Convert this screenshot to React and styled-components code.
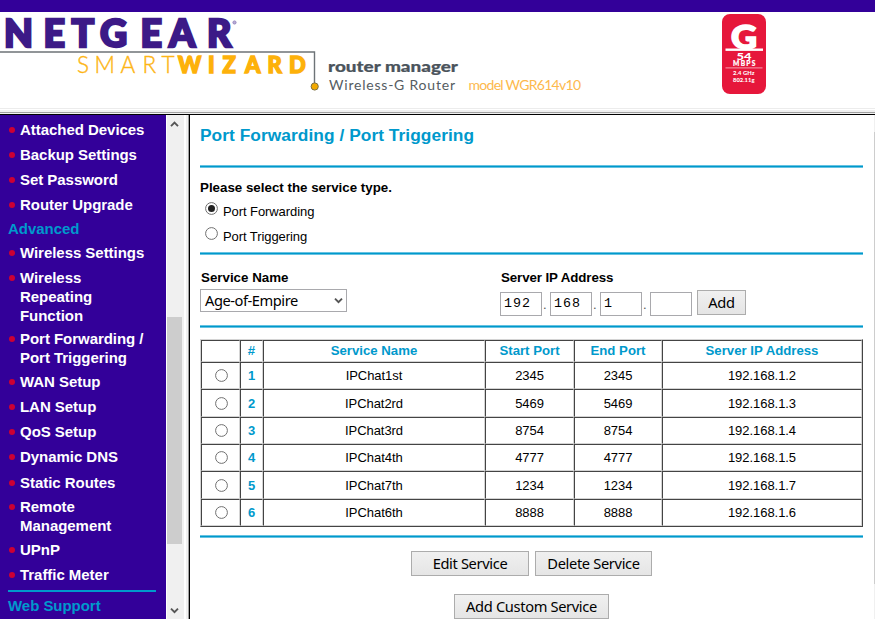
import React, { useState } from 'react';
import styled, { createGlobalStyle } from 'styled-components';

const Global = createGlobalStyle`
  *, *::before, *::after { box-sizing: border-box; }
  html, body { margin: 0; padding: 0; background: #fff; overflow: hidden; }
  body { font-family: 'Liberation Sans', Arial, sans-serif; font-size: 13px; color: #000; }
`;

const Page = styled.div`
  width: 875px;
  height: 619px;
  display: flex;
  flex-direction: column;
  overflow: hidden;
`;

const TopStripe = styled.div`
  flex: 0 0 12px;
  background: #330099;
`;

const Header = styled.header`
  flex: 0 0 96px;
  display: flex;
`;

const LogoArt = styled.svg`
  display: block;
  overflow: visible;
  flex: 0 0 ${(p) => p.width}px;
`;

const HeaderEdge = styled.div`
  flex: 0 0 7px;
  background: linear-gradient(
    #ececec 0 1px, #fff 1px 2px, #f0f0f0 2px 4px, #a0a0a0 4px 5px, #f0f0f0 5px 6px, #000 6px 7px
  );
`;

const Frames = styled.div`
  flex: 1;
  min-height: 0;
  display: flex;
`;

const Nav = styled.nav`
  flex: 0 0 166px;
  background: #330099;
  overflow: hidden;
  padding: 5px 0 0 8px;
  font-size: 15px;
  line-height: 19px;
  letter-spacing: -0.04px;
  font-weight: bold;
`;

const NavItem = styled.a`
  display: flex;
  color: #fff;
  width: 140px;
  margin-bottom: ${(p) => p.$gap}px;
`;

const Bullet = styled.i`
  flex: 0 0 6px;
  height: 6px;
  margin: 7px 6px 0 1px;
  border-radius: 3px;
  background: #cc0033;
`;

const NavLabel = styled.span`
  white-space: pre-line;
  margin-left: -1px;
`;

const NavHeading = styled.div`
  color: #0099cc;
  margin-bottom: 5px;
`;

const NavRule = styled.div`
  width: 148px;
  height: 2px;
  margin-bottom: 4px;
  background: #0099cc;
`;

const ScrollBar = styled.div`
  flex: 0 0 18px;
  display: flex;
  flex-direction: column;
  justify-content: space-between;
  background: #f0f0f0;
  border-left: 1px solid #fff;
`;

const ScrollArrow = styled.svg`
  display: block;
  width: 15px;
  height: 17px;
`;

const ScrollThumb = styled.div`
  width: 15px;
  height: 227px;
  margin-top: 185px;
  margin-bottom: auto;
  background: #cdcdcd;
`;

const FrameEdge = styled.div`
  flex: 0 0 6px;
  background: linear-gradient(to right, #fff 0 2px, #f0f0f0 2px 4px, #a0a0a0 4px 5px, #000 5px 6px);
`;

const Content = styled.main`
  flex: 1;
  display: flex;
  flex-direction: column;
  align-items: stretch;
  padding: 10px 11px 0 10px;
`;

const PageEdge = styled.div`
  flex: 0 0 1px;
  background: linear-gradient(#f0f0f0 0 17px, #cdcdcd 17px 469px, #f0f0f0 469px);
`;

const Title = styled.h1`
  margin: 0;
  height: 40px;
  font-size: 17.33px;
  line-height: 21px;
  letter-spacing: 0.05px;
  color: #0099cc;
`;

const Rule = styled.div`
  flex: 0 0 3px;
  background: #0099cc;
  border: solid #66c2e1;
  border-width: 1px 0;
`;

const TypeSection = styled.section`
  height: 84px;
  padding-top: 12px;
`;

const Label = styled.div`
  font-size: 13.33px;
  font-weight: bold;
  line-height: 16px;
`;

const RadioLine = styled.label`
  display: flex;
  height: 25px;
  padding: 6px 0 0 5px;
  line-height: 16px;
  gap: 5px;
`;

const RadioMark = styled.svg`
  display: block;
  flex: 0 0 13px;
  width: 13px;
  height: 13px;
`;

const RadioText = styled.span`
  padding-top: 2px;
  letter-spacing: -0.08px;
`;

const ServiceForm = styled.section`
  height: 70px;
  display: flex;
  padding-top: 15px;
`;

const ServiceField = styled.div`
  width: 300px;
  display: flex;
  flex-direction: column;
  gap: 3px;
  & > ${Label} { padding-left: 1px; }
`;

const AddressField = styled.div`
  display: flex;
  flex-direction: column;
  gap: 4px;
  & > ${Label} { padding-left: 1px; letter-spacing: -0.1px; }
`;

const SelectBox = styled.div`
  width: 147px;
  height: 23px;
  display: flex;
  align-items: center;
  justify-content: space-between;
  border: 1px solid #a9a9ad;
  padding: 0 3px 1px 4px;
  font: 14.67px/18px 'Noto Sans', sans-serif;
  letter-spacing: -0.45px;
`;

const Chevron = styled.svg`
  display: block;
  width: 9px;
  height: 7px;
`;

const AddressRow = styled.div`
  display: flex;
  align-items: flex-start;
`;

const Octet = styled.input`
  width: 42px;
  height: 24px;
  margin-top: 2px;
  padding: 0 0 1px 3px;
  border: 1px solid #a9a9ad;
  border-radius: 0;
  outline: 0;
  background: #fff;
  color: #000;
  font: 13.33px 'Liberation Mono', monospace;
  letter-spacing: 1px;
`;

const Dot = styled.span`
  width: 8px;
  padding: 7px 0 0 1px;
  line-height: 16px;
  color: #555;
`;

const Button = styled.button`
  width: ${(p) => p.$w}px;
  height: 25px;
  padding: 0 0 1px;
  border: 1px solid #acacac;
  border-radius: 0;
  background: linear-gradient(#f0f0f0, #e5e5e5);
  color: #000;
  font: 14.67px 'Noto Sans', sans-serif;
  letter-spacing: -0.35px;
  white-space: nowrap;
`;

const AddButton = styled(Button)`
  margin-left: 5px;
`;

const Grid = styled.div`
  margin: 11px 0 8px;
  border: 1px solid;
  border-color: #d4d4d4 #444 #444 #d4d4d4;
`;

const Row = styled.div`
  display: grid;
  grid-template-columns: 39px 23px 222px 89px 88px 200px;
  height: ${(p) => p.$h}px;
`;

const Cell = styled.div`
  display: flex;
  align-items: center;
  justify-content: center;
  border: 1px solid;
  border-color: #444 #d4d4d4 #d4d4d4 #444;
  line-height: 15px;
  letter-spacing: -0.05px;
`;

const RadioCell = styled(Cell)`
  padding-left: 2px;
`;

const NumberCell = styled(Cell)`
  color: #0099cc;
  font-weight: bold;
`;

const HeadCell = styled(NumberCell)`
  font-size: 13.2px;
  letter-spacing: 0;
  padding-bottom: 2px;
`;

const Actions = styled.div`
  display: flex;
  justify-content: center;
  gap: 6px;
  padding-top: ${(p) => p.$top}px;
`;

const NAV_MAIN = [
  ['Attached Devices', 6],
  ['Backup Settings', 6],
  ['Set Password', 6],
  ['Router Upgrade', 5],
];

const NAV_ADVANCED = [
  ['Wireless Settings', 6],
  ['Wireless\nRepeating\nFunction', 4],
  ['Port Forwarding /\nPort Triggering', 5],
  ['WAN Setup', 6],
  ['LAN Setup', 6],
  ['QoS Setup', 6],
  ['Dynamic DNS', 7],
  ['Static Routes', 5],
  ['Remote\nManagement', 5],
  ['UPnP', 6],
  ['Traffic Meter', 6],
];

const HEADINGS = ['', '#', 'Service Name', 'Start Port', 'End Port', 'Server IP Address'];

const SERVICES = [
  ['IPChat1st', '2345', '192.168.1.2', 27],
  ['IPChat2rd', '5469', '192.168.1.3', 28],
  ['IPChat3rd', '8754', '192.168.1.4', 27],
  ['IPChat4th', '4777', '192.168.1.5', 27],
  ['IPChat7th', '1234', '192.168.1.7', 28],
  ['IPChat6th', '8888', '192.168.1.6', 27],
];

function Radio({ checked }) {
  return (
    <RadioMark viewBox="0 0 13 13">
      <circle cx="6.5" cy="6.5" r="5.9" fill="#fff" stroke="#707070" strokeWidth="1" />
      {checked && <circle cx="6.5" cy="6.5" r="3.5" fill="#222" />}
    </RadioMark>
  );
}

function NavLinks({ items }) {
  return items.map(([text, gap]) => (
    <NavItem key={text} $gap={gap}>
      <Bullet />
      <NavLabel>{text}</NavLabel>
    </NavItem>
  ));
}

function Brand() {
  return (
    <LogoArt width="700" height="96" viewBox="0 12 700 96" fontFamily="Lato, sans-serif">
      <text y="47" x="4 43.5 71.5 100 140.5 169 207" fontSize="37.5" fontWeight="900" fill="#3c1a87" stroke="#3c1a87" strokeWidth="2.4">NETGEAR</text>
      <circle cx="234.5" cy="22.5" r="1.6" fill="#b9aed6" stroke="#8a78b8" strokeWidth="0.8" />
      <path d="M0 52H314.5V83" fill="none" stroke="#6d7377" strokeWidth="1.4" />
      <text y="73" x="77 94.5 120.5 142.5 161.5" fontSize="22.5" fontWeight="300" fill="#fdb515" stroke="#fdb515" strokeWidth="0.4">SMART</text>
      <text y="72.7" x="178 208 222.5 245 267.5 289" fontSize="22" fontWeight="900" fill="#fdb10a" stroke="#fdb10a" strokeWidth="1.4">WIZARD</text>
      <circle cx="314.7" cy="86.5" r="3.6" fill="#f2a900" stroke="#7d7040" strokeWidth="1" />
      <text x="328" y="72.3" fontSize="14.5" fontWeight="900" fill="#4b545c" stroke="#4b545c" strokeWidth="0.2" textLength="130" lengthAdjust="spacingAndGlyphs">router manager</text>
      <text x="329" y="90" fontSize="14" fill="#555c62" textLength="126">Wireless-G Router</text>
      <text x="468.5" y="90" fontSize="14" fill="#fdb94d" textLength="112.5">model WGR614v10</text>
    </LogoArt>
  );
}

function Badge() {
  return (
    <LogoArt width="175" height="96" viewBox="700 12 175 96" fontFamily="Lato, sans-serif" fontWeight="900" fill="#fff">
      <rect x="722" y="14" width="44" height="80" rx="8" fill="#e6173b" />
      <text x="731" y="48.8" fontSize="32" textLength="26" lengthAdjust="spacingAndGlyphs" stroke="#fff" strokeWidth="1.6">G</text>
      <rect x="725.5" y="48.5" width="37.5" height="2.4" />
      <text x="736.5" y="60" fontSize="10" textLength="15" lengthAdjust="spacingAndGlyphs">54</text>
      <text x="733" y="66.3" fontSize="6.6" textLength="22.5" stroke="#fff" strokeWidth="0.2">MBPS</text>
      <rect x="725.5" y="67.4" width="37" height="1" fill="#f6a0ae" />
      <text x="733" y="75" fontSize="5.8" textLength="21.5">2.4 GHz</text>
      <text x="733" y="82" fontSize="5.8" textLength="21.5">802.11g</text>
    </LogoArt>
  );
}

export default function App() {
  const [octets, setOctets] = useState(['192', '168', '1', '']);
  const edit = (i) => (e) => setOctets(octets.map((v, k) => (k === i ? e.target.value : v)));

  return (
    <Page>
      <Global />
      <TopStripe />
      <Header>
        <Brand />
        <Badge />
      </Header>
      <HeaderEdge />
      <Frames>
        <Nav>
          <NavLinks items={NAV_MAIN} />
          <NavHeading>Advanced</NavHeading>
          <NavLinks items={NAV_ADVANCED} />
          <NavRule />
          <NavHeading>Web Support</NavHeading>
        </Nav>
        <ScrollBar>
          <ScrollArrow viewBox="0 0 15 17">
            <path d="M4 11.2L7.5 7.7L11 11.2" fill="none" stroke="#555" strokeWidth="1.9" />
          </ScrollArrow>
          <ScrollThumb />
          <ScrollArrow viewBox="0 0 15 17">
            <path d="M4 6.7L7.5 10.2L11 6.7" fill="none" stroke="#555" strokeWidth="1.9" />
          </ScrollArrow>
        </ScrollBar>
        <FrameEdge />
        <Content>
          <Title>Port Forwarding / Port Triggering</Title>
          <Rule />
          <TypeSection>
            <Label>Please select the service type.</Label>
            <RadioLine><Radio checked /><RadioText>Port Forwarding</RadioText></RadioLine>
            <RadioLine><Radio /><RadioText>Port Triggering</RadioText></RadioLine>
          </TypeSection>
          <Rule />
          <ServiceForm>
            <ServiceField>
              <Label>Service Name</Label>
              <SelectBox>
                Age-of-Empire
                <Chevron viewBox="0 0 9 7">
                  <path d="M1 1.7L4.5 5.2L8 1.7" fill="none" stroke="#555" strokeWidth="1.9" />
                </Chevron>
              </SelectBox>
            </ServiceField>
            <AddressField>
              <Label>Server IP Address</Label>
              <AddressRow>
                {octets.map((value, i) => (
                  <React.Fragment key={i}>
                    <Octet value={value} onChange={edit(i)} />
                    {i < 3 && <Dot>.</Dot>}
                  </React.Fragment>
                ))}
                <AddButton $w={49}>Add</AddButton>
              </AddressRow>
            </AddressField>
          </ServiceForm>
          <Rule />
          <Grid>
            <Row $h={22}>
              {HEADINGS.map((h, i) => <HeadCell key={i}>{h}</HeadCell>)}
            </Row>
            {SERVICES.map(([name, port, ip, h], i) => (
              <Row key={name} $h={h}>
                <RadioCell><Radio /></RadioCell>
                <NumberCell>{i + 1}</NumberCell>
                <Cell>{name}</Cell>
                <Cell>{port}</Cell>
                <Cell>{port}</Cell>
                <Cell>{ip}</Cell>
              </Row>
            ))}
          </Grid>
          <Rule />
          <Actions $top={13}>
            <Button $w={118}>Edit Service</Button>
            <Button $w={117}>Delete Service</Button>
          </Actions>
          <Actions $top={18}>
            <Button $w={155}>Add Custom Service</Button>
          </Actions>
        </Content>
        <PageEdge />
      </Frames>
    </Page>
  );
}
